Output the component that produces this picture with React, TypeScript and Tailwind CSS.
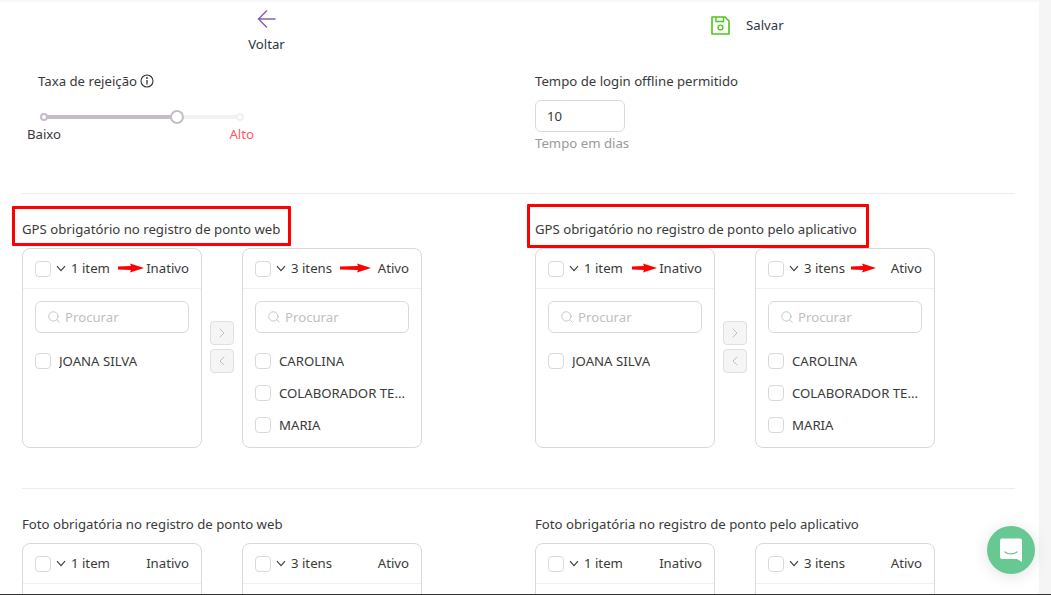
import { ChevronLeft, ChevronRight, Search } from "lucide-react";

function Box() {
  return <span className="block h-4 w-4 shrink-0 rounded-[4px] border border-[#d9d9d9] bg-white" />;
}

function Arrow({ className, w }: { className: string; w: number }) {
  return (
    <svg className={`absolute ${className}`} width={w} height="10" viewBox={`0 0 ${w} 10`}>
      <path d={`M0 3.6 L${w - 13} 3 L${w - 14} 0.5 L${w} 5 L${w - 14} 9.5 L${w - 13} 7 L0 6.4 Z`} fill="#ff0000" />
    </svg>
  );
}

function Panel({ count, label, items, search }: { count: string; label: string; items: string[]; search: boolean }) {
  return (
    <div className="h-[200px] w-[180px] shrink-0 rounded-lg border border-[#d9d9d9] bg-white">
      <div className="flex h-10 items-center border-b border-[#f0f0f0] px-3">
        <Box />
        <svg className="ml-[5px] shrink-0" width="10" height="7" viewBox="0 0 10 7">
          <path d="M1 1.2 L5 5.6 L9 1.2" fill="none" stroke="#3a3a3a" strokeWidth="1.1" />
        </svg>
        <span className="mb-[2px] ml-[5px]">{count}</span>
        <span className="mb-[2px] ml-auto">{label}</span>
      </div>
      {search && (
        <div className="px-3 pt-3">
          <div className="flex h-8 items-center gap-1 rounded-md border border-[#d9d9d9] px-[11px] text-[#bfbfbf]">
            <Search className="h-[14px] w-[14px]" strokeWidth={1.5} />
            <span>Procurar</span>
          </div>
        </div>
      )}
      <div className="px-3 pt-3">
        {items.map((i) => (
          <div key={i} className="flex h-8 items-center gap-2">
            <Box />
            <span className="truncate">{i}</span>
          </div>
        ))}
      </div>
    </div>
  );
}

function Transfer({ search = true, full = true, arrows = [] }: { search?: boolean; full?: boolean; arrows?: { c: string; w: number }[] }) {
  return (
    <div className="relative flex items-start">
      <Panel count="1 item" label="Inativo" items={full ? ["JOANA SILVA"] : []} search={search} />
      <div className="flex w-10 shrink-0 flex-col items-center gap-1 pt-[73px]">
        {full && (
          <>
            <span className="flex h-6 w-6 items-center justify-center rounded border border-[#e0e0e0] bg-[#f5f5f5] text-[#b5b5b5]">
              <ChevronRight className="h-4 w-4" strokeWidth={1.25} />
            </span>
            <span className="flex h-6 w-6 items-center justify-center rounded border border-[#e0e0e0] bg-[#f5f5f5] text-[#b5b5b5]">
              <ChevronLeft className="h-4 w-4" strokeWidth={1.25} />
            </span>
          </>
        )}
      </div>
      <Panel count="3 itens" label="Ativo" items={full ? ["CAROLINA", "COLABORADOR TE...", "MARIA"] : []} search={search} />
      {arrows.map((a) => (
        <Arrow key={a.c} className={a.c} w={a.w} />
      ))}
    </div>
  );
}

function Divider() {
  return <div className="mr-6 h-px bg-[#ececec]" />;
}

export default function App() {
  return (
    <div className="relative flex h-[595px] w-[1051px] overflow-hidden bg-white text-[13.2px] leading-[20px] text-[#3a3a3a]" style={{ fontFamily: '"Noto Sans", "Open Sans", sans-serif' }}>
      <main className="w-[1039px] shrink-0 border-t-2 border-[#f7f7f7] pl-[22px]">
        <div className="grid h-[60px] grid-cols-[513px_1fr]">
          <div className="flex flex-col items-center pr-[24px] pt-[7px]">
            <svg width="20" height="20" viewBox="0 0 20 20">
              <path d="M18.5 10 H2 M10 1.5 L1.5 10 L10 18.5" fill="none" stroke="#8e5fb0" strokeWidth="1.5" />
            </svg>
            <span className="mt-[5px] text-[#2f3542]">Voltar</span>
          </div>
          <div className="flex items-start pl-[176px] pt-[13px]">
            <svg className="mt-[1px]" width="19" height="19" viewBox="0 0 19 19">
              <path d="M1 1 H14 L18 5 V18 H1 Z" fill="none" stroke="#52c41a" strokeWidth="1.6" strokeLinejoin="round" />
              <path d="M5 1 V5.5 H12.5 V1" fill="none" stroke="#52c41a" strokeWidth="1.4" />
              <circle cx="9.5" cy="11.5" r="2.4" fill="none" stroke="#52c41a" strokeWidth="1.4" />
            </svg>
            <span className="ml-[16px] text-[#2f3542]">Salvar</span>
          </div>
        </div>

        <div className="grid h-[131px] grid-cols-[513px_1fr] pt-[9px]">
          <div>
            <div className="flex items-center gap-[3px] pl-4">
              <span>Taxa de rejeição</span>
              <svg width="14" height="14" viewBox="0 0 14 14">
                <circle cx="7" cy="7" r="6" fill="none" stroke="#333" strokeWidth="1.1" />
                <path d="M7 6 V10.5" stroke="#333" strokeWidth="1.3" />
                <circle cx="7" cy="4" r="0.9" fill="#333" />
              </svg>
            </div>
            <div className="relative ml-[21px] mt-[24px] h-1 w-[198px] bg-[#f2f2f2]">
              <div className="h-1 w-[134px] bg-[#c6bcc9]" />
              <span className="absolute -left-[3px] -top-[2px] h-2 w-2 rounded-full border-2 border-[#c6bcc9] bg-white" />
              <span className="absolute -right-[3px] -top-[2px] h-2 w-2 rounded-full border-2 border-[#f0f0f0] bg-white" />
              <span className="absolute left-[127px] -top-[5px] h-[14px] w-[14px] rounded-full border-2 border-[#c6bcc9] bg-white" />
            </div>
            <div className="ml-[5px] mt-[5px] flex w-[227px] justify-between">
              <span>Baixo</span>
              <span className="text-[#ff5a5f]">Alto</span>
            </div>
          </div>
          <div>
            <div>Tempo de login offline permitido</div>
            <div className="mt-[9px] flex h-8 w-[90px] items-center rounded-md border border-[#d9d9d9] px-[11px]">10</div>
            <div className="mt-[1px] text-[#9a9a9a]">Tempo em dias</div>
          </div>
        </div>

        <Divider />

        <div className="grid grid-cols-[513px_1fr] pt-[25px]">
          <div>
            <div className="mb-[9px] h-5">GPS obrigatório no registro de ponto web</div>
            <Transfer arrows={[{ c: "left-[96px] top-[15px]", w: 26 }, { c: "left-[318px] top-[15px]", w: 31 }]} />
          </div>
          <div>
            <div className="mb-[9px] h-5">GPS obrigatório no registro de ponto pelo aplicativo</div>
            <Transfer arrows={[{ c: "left-[97px] top-[15px]", w: 25 }, { c: "left-[316px] top-[15px]", w: 25 }]} />
          </div>
        </div>

        <div className="mt-10">
          <Divider />
        </div>

        <div className="grid grid-cols-[513px_1fr] pt-[25px]">
          <div>
            <div className="mb-[9px] h-5">Foto obrigatória no registro de ponto web</div>
            <Transfer search={false} full={false} />
          </div>
          <div>
            <div className="mb-[9px] h-5">Foto obrigatória no registro de ponto pelo aplicativo</div>
            <Transfer search={false} full={false} />
          </div>
        </div>
      </main>
      <aside className="flex-1 bg-[#f5f5f5]" />

      <div className="absolute left-[12px] top-[206px] h-[40px] w-[279px] rounded-[1px] border-[3px] border-[#ff0000]" />
      <div className="absolute left-[527px] top-[204px] h-[44px] w-[342px] rounded-[1px] border-[3px] border-[#ff0000]" />

      <div className="absolute left-[987px] top-[526px] flex h-12 w-12 items-center justify-center rounded-full bg-[#68c893] shadow-[0_2px_16px_rgba(0,0,0,0.12)]">
        <svg width="24" height="26" viewBox="0 0 24 26">
          <path d="M3 1.5h18a2 2 0 0 1 2 2V25l-5-3H3a2 2 0 0 1-2-2V3.5a2 2 0 0 1 2-2z" fill="#fff" />
          <path d="M6 15c3.5 2.4 8.5 2.4 12 0" fill="none" stroke="#68c893" strokeWidth="1.4" strokeLinecap="round" />
        </svg>
      </div>
      <div className="absolute bottom-0 left-0 h-px w-full bg-[#333]" />
    </div>
  );
}
